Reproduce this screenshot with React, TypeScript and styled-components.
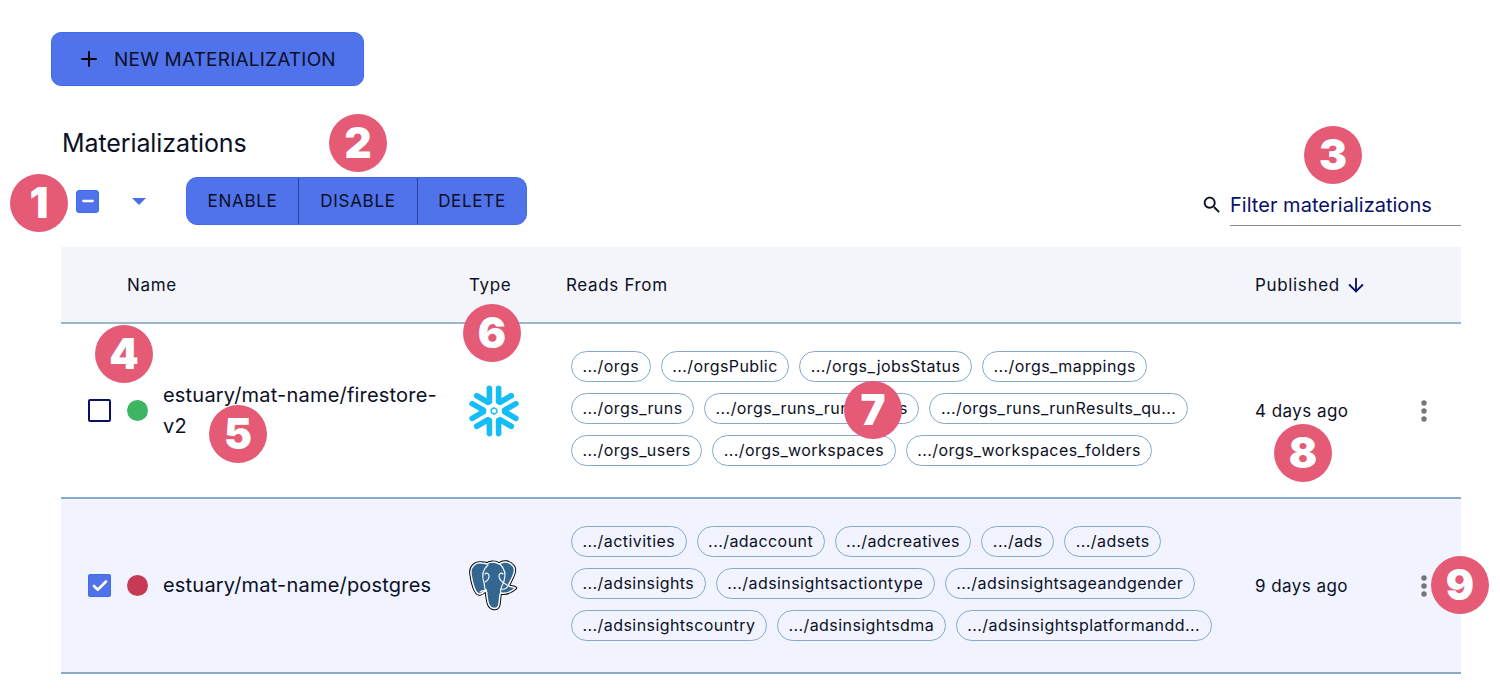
import React from "react";
import styled, { createGlobalStyle } from "styled-components";
import { ArrowDown, Check, Minus, Plus } from "lucide-react";

const Global = createGlobalStyle`
  html, body { margin: 0; padding: 0; background: #fff; }
  body { font-family: Inter, "Liberation Sans", sans-serif; color: #0b1026; }
`;

const Page = styled.div`
  position: relative;
  width: 1500px;
  height: 693px;
  box-sizing: border-box;
  padding: 32px 39px 0 51px;
  overflow: hidden;
`;

const NewButton = styled.button`
  display: flex;
  align-items: center;
  gap: 13px;
  width: 313px;
  height: 54px;
  box-sizing: border-box;
  padding: 0 0 0 25px;
  border: 1px solid #3f6ceb;
  border-radius: 10px;
  background: #5072eb;
  color: #0b1026;
  font: 400 19px Inter, sans-serif;
  letter-spacing: 0.2px;
  white-space: nowrap;
`;

const Title = styled.h2`
  margin: 42px 0 0 11px;
  height: 30px;
  font: 400 25px/31px Inter, sans-serif;
  letter-spacing: -0.1px;
  color: #0b1026;
`;

const Toolbar = styled.div`
  display: flex;
  align-items: center;
  height: 48px;
  margin-top: 19px;
  padding-left: 25px;
`;

const HeadCheck = styled.span`
  display: flex;
  align-items: center;
  justify-content: center;
  width: 23px;
  height: 23px;
  box-sizing: border-box;
  border: 1px solid #3f6ceb;
  border-radius: 3px;
  background: #5072eb;
  color: #fff;
`;

const Caret = styled.span`
  width: 0;
  height: 0;
  margin: 0 40px 0 33px;
  border-left: 7px solid transparent;
  border-right: 7px solid transparent;
  border-top: 7px solid #4a6ee8;
`;

const Group = styled.div`
  display: flex;
  height: 48px;
  box-sizing: border-box;
  border: 1px solid #3f6ceb;
  border-radius: 11px;
  background: #5072eb;
  overflow: hidden;
`;

const GroupButton = styled.button<{ $w: number }>`
  width: ${(p) => p.$w}px;
  padding: 0;
  border: 0;
  border-left: 1px solid #2c4291;
  background: transparent;
  color: #0b1026;
  font: 400 17px Inter, sans-serif;
  letter-spacing: 0.7px;
  &:first-child { border-left: 0; }
`;

const Filter = styled.div`
  display: flex;
  align-items: flex-start;
  margin-left: auto;
  height: 48px;
  color: #0b1026;
`;

const SearchIcon = styled.svg`
  display: block;
  margin: 17px 0 0 -2px;
`;

const FilterField = styled.div`
  width: 231px;
  height: 49px;
  box-sizing: border-box;
  margin-left: 7px;
  border-bottom: 1px solid #888;
  color: #0a1068;
  font: 400 20px/57px Inter, sans-serif;
  letter-spacing: 0.02px;
`;

const Table = styled.table`
  width: 1400px;
  margin: 22px 0 0 10px;
  border-collapse: separate;
  border-spacing: 0;
  table-layout: fixed;
`;

const HeadCell = styled.th<{ $pad?: number }>`
  height: 77px;
  padding: 0 0 0 ${(p) => p.$pad ?? 16}px;
  box-sizing: border-box;
  background: #f4f5fa;
  border-bottom: 2px solid #9db6cf;
  text-align: left;
  font: 400 17px Inter, sans-serif;
  letter-spacing: 0.65px;
  color: #0b1026;
`;

const SortLabel = styled.span`
  display: inline-flex;
  align-items: center;
  gap: 5px;
  color: #0b1026;
  svg { color: #0a1068; }
`;

const Row = styled.tr<{ $selected?: boolean }>`
  background: ${(p) => (p.$selected ? "#f1f4fe" : "#fff")};
`;

const Cell = styled.td<{ $pad?: number }>`
  height: 175px;
  padding: 0 0 0 ${(p) => p.$pad ?? 16}px;
  box-sizing: border-box;
  border-bottom: 2.5px solid #88a9c8;
  vertical-align: middle;
  font: 400 17px Inter, sans-serif;
  letter-spacing: 0.45px;
`;

const NameWrap = styled.div`
  display: flex;
  align-items: center;
  padding-left: 27px;
`;

const RowCheck = styled.span<{ $on?: boolean }>`
  display: flex;
  flex: none;
  align-items: center;
  justify-content: center;
  width: 23px;
  height: 23px;
  box-sizing: border-box;
  border: ${(p) => (p.$on ? "1px solid #3f6ceb" : "2px solid #0a1068")};
  border-radius: 2px;
  background: ${(p) => (p.$on ? "#5072eb" : "transparent")};
  color: #fff;
`;

const Dot = styled.span<{ $color: string }>`
  flex: none;
  width: 21px;
  height: 21px;
  margin: 0 15px 0 16px;
  border-radius: 50%;
  background: ${(p) => p.$color};
`;

const Name = styled.span`
  width: 280px;
  font: 400 20px/31px Inter, sans-serif;
  letter-spacing: 0.2px;
  color: #0b1026;
`;

const Chips = styled.div`
  display: flex;
  flex-wrap: wrap;
  gap: 11px 10px;
  width: 650px;
  margin: 0 0 5px 5px;
`;

const Chip = styled.span`
  height: 31px;
  box-sizing: border-box;
  padding: 0 10.5px;
  border: 1px solid #86a9cb;
  border-radius: 16px;
  font: 400 16px/29px Inter, sans-serif;
  letter-spacing: 0.43px;
  white-space: nowrap;
  color: #0b1026;
`;

const Kebab = styled.svg`
  display: block;
  margin-left: 20px;
`;

const Badge = styled.span<{ $x: number; $y: number }>`
  position: absolute;
  left: ${(p) => p.$x - 29}px;
  top: ${(p) => p.$y - 29}px;
  display: flex;
  align-items: center;
  justify-content: center;
  width: 58px;
  height: 58px;
  border-radius: 50%;
  background: #e55a75;
  color: #fff;
  font: 900 42px/1 Inter, sans-serif;
`;

const IconBox = styled.svg`
  display: block;
`;

const Snowflake = () => {
  const arms = [0, 60, 120, 180, 240, 300];
  return (
    <IconBox width="50" height="52" viewBox="-25 -26 50 52">
      <g stroke="#14bdf8" strokeWidth="5.6" strokeLinecap="round" fill="none">
        {arms.map((a) => (
          <g key={a} transform={`rotate(${a})`}>
            <path d="M-4.6 -22.6 L-4.6 -9.6" />
            <path d="M4.6 -22.6 L4.6 -9.6" />
          </g>
        ))}
      </g>
      <path d="M0 -3.2 L2.8 -1.6 L2.8 1.6 L0 3.2 L-2.8 1.6 L-2.8 -1.6Z" fill="none" stroke="#14bdf8" strokeWidth="1.4" />
    </IconBox>
  );
};

const Postgres = () => {
  const d =
    "M13 3C6 2 1 7 2 14C3 22 6 35 11 34C14 33.5 15 32 17 30C18 33 18 41 20 45C22 49 28 50 29.5 46C31 42 30 36 31.5 33C36 34 42 32 46.5 28C45 26 40 28 39.5 25C43 18 48 10 44 6C40 1 34 1 30 4C26 1 20 2 18 4C16 3 14 3 13 3Z";
  return (
    <IconBox width="50" height="51" viewBox="0 0 50 51">
      <path d={d} fill="#000" stroke="#000" strokeWidth="3.4" strokeLinejoin="round" />
      <path d={d} fill="#336791" stroke="#fff" strokeWidth="1.5" strokeLinejoin="round" />
      <g fill="none" stroke="#fff" strokeWidth="1.1" strokeLinecap="round">
        <path d="M19 5C13 10 13 17 15 23C16 27 15 30 17.5 30" />
        <path d="M31 4C36 9 37 15 35 21C34 25 31 27 31.5 33" />
        <path d="M16 14C18 12 20 14 20 16C20 19 18 21 16 22" />
        <path d="M34 14C32 12 30 14 30 16C30 20 33 22 38 25" />
        <path d="M11 32C14 30 17 30 18 33" />
        <path d="M32 29C36 30 38 28 39.5 25" />
      </g>
    </IconBox>
  );
};

const Dots = () => (
  <Kebab width="8" height="24" viewBox="0 0 8 24">
    <g fill="#757575">
      <circle cx="4" cy="4" r="2.7" />
      <circle cx="4" cy="12" r="2.7" />
      <circle cx="4" cy="20" r="2.7" />
    </g>
  </Kebab>
);

const rows = [
  {
    name: "estuary/mat-name/firestore-v2",
    color: "#3db562",
    selected: false,
    icon: <Snowflake />,
    when: "4 days ago",
    chips: [
      ".../orgs",
      ".../orgsPublic",
      ".../orgs_jobsStatus",
      ".../orgs_mappings",
      ".../orgs_runs",
      ".../orgs_runs_runResults",
      ".../orgs_runs_runResults_qu...",
      ".../orgs_users",
      ".../orgs_workspaces",
      ".../orgs_workspaces_folders",
    ],
  },
  {
    name: "estuary/mat-name/postgres",
    color: "#c63a55",
    selected: true,
    icon: <Postgres />,
    when: "9 days ago",
    chips: [
      ".../activities",
      ".../adaccount",
      ".../adcreatives",
      ".../ads",
      ".../adsets",
      ".../adsinsights",
      ".../adsinsightsactiontype",
      ".../adsinsightsageandgender",
      ".../adsinsightscountry",
      ".../adsinsightsdma",
      ".../adsinsightsplatformandd...",
    ],
  },
];

const badges: [number, number][] = [
  [39, 203],
  [358, 143],
  [1333, 155],
  [124, 354],
  [238, 434],
  [492, 333],
  [873, 410],
  [1303, 453],
  [1460, 585],
];

export default function App() {
  return (
    <Page>
      <Global />
      <NewButton>
        <Plus size={24} strokeWidth={2} color="#000" />
        NEW MATERIALIZATION
      </NewButton>
      <Title>Materializations</Title>
      <Toolbar>
        <HeadCheck>
          <Minus size={16} strokeWidth={3.5} />
        </HeadCheck>
        <Caret />
        <Group>
          <GroupButton $w={111}>ENABLE</GroupButton>
          <GroupButton $w={119}>DISABLE</GroupButton>
          <GroupButton $w={109}>DELETE</GroupButton>
        </Group>
        <Filter>
          <SearchIcon width="22" height="22" viewBox="0 0 24 24" fill="currentColor">
            <path d="M15.5 14h-.79l-.28-.27C15.41 12.59 16 11.11 16 9.5 16 5.91 13.09 3 9.5 3S3 5.91 3 9.5 5.91 16 9.5 16c1.61 0 3.09-.59 4.23-1.57l.27.28v.79l5 4.99L20.49 19l-4.99-5zm-6 0C7.01 14 5 11.99 5 9.5S7.01 5 9.5 5 14 7.01 14 9.5 11.99 14 9.5 14z" />
          </SearchIcon>
          <FilterField>Filter materializations</FilterField>
        </Filter>
      </Toolbar>
      <Table>
        <colgroup>
          <col width="392" />
          <col width="97" />
          <col width="689" />
          <col width="161" />
          <col width="61" />
        </colgroup>
        <thead>
          <tr>
            <HeadCell $pad={66}>Name</HeadCell>
            <HeadCell>Type</HeadCell>
            <HeadCell>Reads From</HeadCell>
            <HeadCell>
              <SortLabel>
                Published
                <ArrowDown size={22} strokeWidth={2} />
              </SortLabel>
            </HeadCell>
            <HeadCell />
          </tr>
        </thead>
        <tbody>
          {rows.map((r) => (
            <Row key={r.name} $selected={r.selected}>
              <Cell $pad={0}>
                <NameWrap>
                  <RowCheck $on={r.selected}>{r.selected && <Check size={18} strokeWidth={3.5} />}</RowCheck>
                  <Dot $color={r.color} />
                  <Name>{r.name}</Name>
                </NameWrap>
              </Cell>
              <Cell>{r.icon}</Cell>
              <Cell>
                <Chips>
                  {r.chips.map((c) => (
                    <Chip key={c}>{c}</Chip>
                  ))}
                </Chips>
              </Cell>
              <Cell>{r.when}</Cell>
              <Cell $pad={0}>
                <Dots />
              </Cell>
            </Row>
          ))}
        </tbody>
      </Table>
      {badges.map(([x, y], i) => (
        <Badge key={i} $x={x} $y={y}>
          {i + 1}
        </Badge>
      ))}
    </Page>
  );
}
